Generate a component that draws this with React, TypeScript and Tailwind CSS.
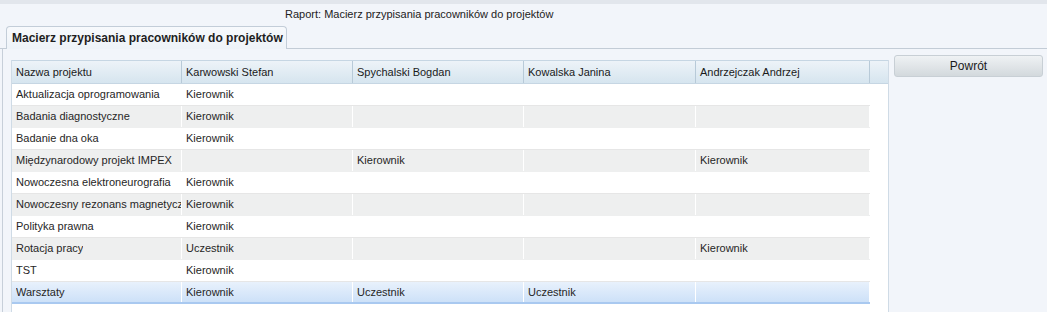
import React from "react";

const cols = [
  { name: "Nazwa projektu", w: "w-[170px]" },
  { name: "Karwowski Stefan", w: "w-[171px]" },
  { name: "Spychalski Bogdan", w: "w-[171px]" },
  { name: "Kowalska Janina", w: "w-[172px]" },
  { name: "Andrzejczak Andrzej", w: "w-[174px]" },
];

const rows: string[][] = [
  ["Aktualizacja oprogramowania", "Kierownik", "", "", ""],
  ["Badania diagnostyczne", "Kierownik", "", "", ""],
  ["Badanie dna oka", "Kierownik", "", "", ""],
  ["Międzynarodowy projekt IMPEX", "", "Kierownik", "", "Kierownik"],
  ["Nowoczesna elektroneurografia", "Kierownik", "", "", ""],
  ["Nowoczesny rezonans magnetyczny", "Kierownik", "", "", ""],
  ["Polityka prawna", "Kierownik", "", "", ""],
  ["Rotacja pracy", "Uczestnik", "", "", "Kierownik"],
  ["TST", "Kierownik", "", "", ""],
  ["Warsztaty", "Kierownik", "Uczestnik", "Uczestnik", ""],
];

export default function App() {
  return (
    <div
      className="w-[1047px] h-[312px] overflow-hidden bg-[#f2f5fa] text-[#1a1a1a] flex flex-col"
      style={{ fontFamily: '"Liberation Sans", Arial, sans-serif' }}
    >
      <div className="h-[4px] bg-[#e2e6ec] shrink-0" />
      <div className="h-[22px] shrink-0 pl-[285px] pt-[4px] text-[11px] leading-[13px] text-[#222]">
        Raport: Macierz przypisania pracowników do projektów
      </div>
      <div className="h-[23px] shrink-0 flex items-end">
        <div className="w-[6px] h-full border-b border-[#c3ccd6]" />
        <div className="w-[281px] h-[23px] rounded-t-[4px] border border-b-0 border-[#c3cdd8] bg-gradient-to-b from-[#f7f9fc] to-[#eef3f8] pl-[5px] pt-[4px] text-[12px] leading-[14px] font-bold text-[#1e1e1e] whitespace-nowrap">
          Macierz przypisania pracowników do projektów
        </div>
        <div className="flex-1 h-full border-b border-[#c3ccd6]" />
      </div>
      <div className="flex-1 flex ml-[2px] border-l border-[#c7cfd9]">
        <div className="ml-[8px] mt-[11px] w-[878px] bg-white border-l border-r border-[#cfdbe6] flex flex-col">
          <div className="flex h-[24px] border-t border-b border-[#c6d6e3] bg-gradient-to-b from-[#edf3f8] to-[#d6e5ef] text-[11px]">
            {cols.map((c) => (
              <div
                key={c.name}
                className={`${c.w} shrink-0 h-full border-r border-[#b8cad8] pl-[4px] flex items-center whitespace-nowrap overflow-hidden`}
              >
                {c.name}
              </div>
            ))}
            <div className="flex-1" />
          </div>
          {rows.map((r, i) => {
            const selected = i === rows.length - 1;
            const gray = i % 2 === 1;
            const rowBg = selected
              ? "bg-gradient-to-b from-[#e8f1fc] to-[#cde1f8] border-b-2 border-[#a9c9f0]"
              : gray
              ? "bg-[#eeefef] border-b border-[#eeefef]"
              : "bg-white border-b border-[#e6e6e6]";
            return (
              <div key={i} className="flex h-[22px]">
                <div className={`flex w-[858px] shrink-0 ${rowBg}`}>
                  {r.map((v, j) => (
                    <div
                      key={j}
                      className={`${cols[j].w} shrink-0 h-full border-r border-white pl-[4px] flex items-center whitespace-nowrap overflow-hidden text-[11px] text-[#262626]`}
                    >
                      <span className="block overflow-hidden">{v}</span>
                    </div>
                  ))}
                </div>
              </div>
            );
          })}
        </div>
        <div className="ml-[5px] mt-[6px]">
          <button className="w-[149px] h-[22px] rounded-[3px] border border-[#c8cfd5] bg-gradient-to-b from-[#eff2f4] to-[#d3d9dd] text-[12px] leading-[14px] text-[#1a1a1a] flex items-center justify-center pb-[1px]">
            Powrót
          </button>
        </div>
      </div>
    </div>
  );
}
